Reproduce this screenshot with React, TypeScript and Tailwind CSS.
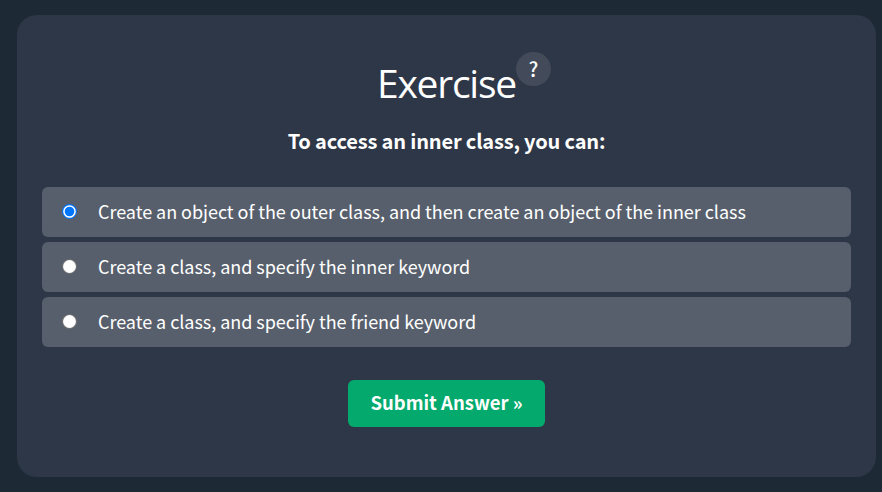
import { useState } from "react";

const options = [
  "Create an object of the outer class, and then create an object of the inner class",
  "Create a class, and specify the inner keyword",
  "Create a class, and specify the friend keyword",
];

function Radio({ checked }: { checked: boolean }) {
  return (
    <svg viewBox="0 0 15 15" className="-mt-0.5 h-[15px] w-[15px] shrink-0">
      {checked ? (
        <>
          <circle cx="7.5" cy="7.5" r="7.4" fill="#0075ff" />
          <circle cx="7.5" cy="7.5" r="6.3" fill="#ffffff" />
          <circle cx="7.5" cy="7.5" r="4.8" fill="#0075ff" />
        </>
      ) : (
        <>
          <circle cx="7.5" cy="7.5" r="7.3" fill="#767676" />
          <circle cx="7.5" cy="7.5" r="6.4" fill="#ffffff" />
        </>
      )}
    </svg>
  );
}

export default function App() {
  const [selected, setSelected] = useState(0);
  return (
    <main className="h-[492px] w-[882px] overflow-hidden bg-[#1d2a35] pt-[15px] pl-[17px] font-['Noto_Sans_CJK_SC',sans-serif] text-white">
      <section className="flex h-[462px] w-[859px] flex-col items-center rounded-[20px] bg-[#2e3748] px-[25px] pt-[37px]">
        <header className="flex h-[58px] items-start pl-[34px]">
          <h1 className="mt-[2px] w-[140px] pl-px font-['Open_Sans',sans-serif] text-[39px] leading-[58px] tracking-[-1.25px]">
            Exercise
          </h1>
          <button className="flex h-[34px] w-[35px] items-center justify-center rounded-full bg-[#434b5a] pb-px text-[20px] leading-none font-medium">
            ?
          </button>
        </header>
        <h2 className="mt-[16px] h-[30px] text-[20px] leading-[30px] font-bold tracking-[-0.17px]">
          To access an inner class, you can:
        </h2>
        <div role="radiogroup" className="mt-[31px] flex w-full flex-col gap-[5px]">
          {options.map((text, i) => (
            <div
              key={text}
              role="radio"
              aria-checked={selected === i}
              onClick={() => setSelected(i)}
              className="flex h-[50px] items-center rounded-[6px] bg-[#585f6c] pl-5 text-[18px] tracking-[-0.04px] whitespace-nowrap"
            >
              <Radio checked={selected === i} />
              <span className="ml-[21px] pb-0.5">{text}</span>
            </div>
          ))}
        </div>
        <button className="mt-[33px] h-[47px] w-[197px] rounded-[6px] bg-[#04aa6d] pb-0.5 text-[18.5px] font-bold whitespace-nowrap">
          Submit Answer »
        </button>
      </section>
    </main>
  );
}
